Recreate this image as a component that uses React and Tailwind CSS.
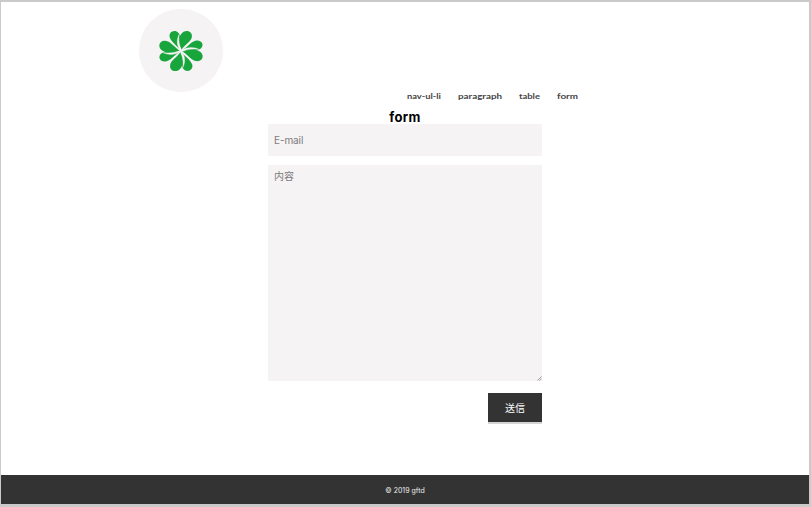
import React from 'react';

const turns = [0, 90, 180, 270];

function Clover() {
  return (
    <svg viewBox="-75 -75 150 150" preserveAspectRatio="none" className="h-[50px] w-[54px]" aria-hidden="true">
      {turns.map((t) => (
        <path
          key={`s${t}`}
          transform={`rotate(${t})`}
          d="M-4 -6 C-10 -15 -26 -26 -31 -40 C-36 -57 -17 -67 -7 -54 L-2 -48 L-4 -6Z"
          fill="#18a53b"
        />
      ))}
      {turns.map((t) => (
        <path
          key={`b${t}`}
          transform={`rotate(${t})`}
          d="M1 -3 C-6 -18 -9 -34 0 -50 C9 -67 34 -62 30 -41 C27 -27 13 -21 1 -3Z"
          fill="#18a53b"
        />
      ))}
      {turns.map((t) => (
        <path
          key={`g${t}`}
          transform={`rotate(${t})`}
          d="M-4 -52 C-13 -36 -12 -17 -3 -4 L0 0 L1 -5 C-5 -18 -8 -35 -4 -52Z"
          fill="#f5f3f4"
          stroke="#f5f3f4"
          strokeWidth="1"
        />
      ))}
    </svg>
  );
}

const links = [
  { label: 'nav-ul-li', width: 34 },
  { label: 'paragraph', width: 44 },
  { label: 'table', width: 21 },
  { label: 'form', width: 21 },
];

function WideText({ label, width }) {
  return (
    <svg width={width} height="12" className="block overflow-visible">
      <text x="0" y="7" textLength={width} lengthAdjust="spacingAndGlyphs" fill="#444444">
        {label}
      </text>
    </svg>
  );
}

export default function App() {
  return (
    <div className="flex h-[507px] w-[811px] flex-col overflow-hidden border-t-2 border-r-2 border-b-3 border-l border-[#cacaca] bg-white font-['Inter','Noto_Sans_CJK_JP',sans-serif]">
      <header className="h-[107px] shrink-0 pt-[7px] pl-[138px]">
        <a className="flex h-[83px] w-[84px] items-center justify-center rounded-full bg-[#f5f3f4]">
          <Clover />
        </a>
        <nav className="ml-[268px] flex h-3 gap-[17px] font-['Lato',sans-serif] text-[8px] font-bold">
          {links.map((l) => (
            <a key={l.label}><WideText {...l} /></a>
          ))}
        </nav>
      </header>
      <main className="ml-[267px] w-[274px] grow">
        <h1 className="flex h-[15px] items-center justify-center pt-px text-[13px] leading-[14px] font-bold tracking-[0.4px] text-black">form</h1>
        <form className="flex flex-col">
          <input
            placeholder="E-mail"
            className="h-8 w-full bg-[#f5f3f4] px-[6px] text-[10px] tracking-[-0.1px] outline-none placeholder:text-[#7c7c7c]"
          />
          <div className="relative mt-[9px] h-[216px]">
            <textarea
              placeholder="内容"
              className="block h-full w-full resize-none bg-[#f5f3f4] px-[6px] pt-1 text-[10px] leading-[15px] outline-none placeholder:text-[#7c7c7c]"
            />
            <svg viewBox="0 0 6 6" className="absolute right-0 bottom-0 h-[5px] w-[5px]" aria-hidden="true">
              <path d="M0.5 5.5 5.5 0.5M3 5.5 5.5 3" fill="none" stroke="#929292" strokeWidth="1" />
            </svg>
          </div>
          <button
            type="button"
            className="mt-3 h-[31px] w-[54px] self-end border-b-2 border-[#d5d3d4] bg-[#333333] pt-px text-[10px] text-white"
          >
            送信
          </button>
        </form>
      </main>
      <footer className="flex h-[29px] shrink-0 items-center justify-center bg-[#333333] pt-[3px] text-[7px] text-[#eeeeee]">
        © 2019 gftd
      </footer>
    </div>
  );
}
